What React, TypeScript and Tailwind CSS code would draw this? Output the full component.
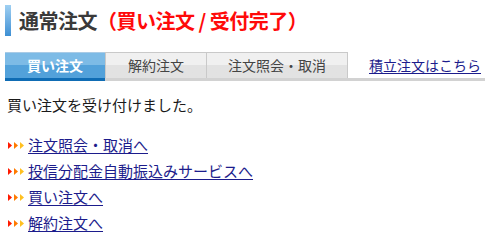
import React from "react";

const Arrows = () => (
  <svg width="17" height="7" viewBox="0 0 17 7" className="shrink-0">
    <polygon points="0,0 4,3.5 0,7" fill="#ff1a00" />
    <polygon points="6,0 10,3.5 6,7" fill="#ff7a00" />
    <polygon points="12,0 16,3.5 12,7" fill="#ffc020" />
  </svg>
);

export default function App() {
  const links = [
    "注文照会・取消へ",
    "投信分配金自動振込みサービスへ",
    "買い注文へ",
    "解約注文へ",
  ];
  return (
    <div
      className="w-[485px] h-[236px] bg-white overflow-hidden"
      style={{ fontFamily: '"Noto Sans CJK JP", "Noto Sans", sans-serif' }}
    >
      <div className="flex items-center pl-[5px] pt-[5px]">
        <div className="w-[6px] h-[31px] bg-gradient-to-b from-[#9fd0f2] to-[#3c8fd3]" />
        <div className="ml-[8px] flex items-center text-[20px] font-bold leading-[31px] tracking-[-0.5px]">
          <span className="text-[#3a3a3a]">通常注文</span>
          <span className="text-[#ff0a0a]">（買い注文 / 受付完了）</span>
        </div>
      </div>

      <div className="mt-[16px] ml-[5px] flex flex-col">
        <div className="flex items-end h-[26px]">
          <div className="w-[100px] h-[26px] flex items-center justify-center border-t border-[#a9cbe6] bg-gradient-to-b from-[#7dbbe6] from-50% to-[#52a1da] to-50% text-white font-bold text-[14px]">
            買い注文
          </div>
          <div className="w-[101px] h-[26px] flex items-center justify-center border-t border-l border-[#c9c9c9] bg-gradient-to-b from-[#f0f0f0] from-50% to-[#e2e2e2] to-50% text-[#444] text-[14px]">
            解約注文
          </div>
          <div className="w-[142px] h-[26px] flex items-center justify-center border-t border-l border-r border-[#c9c9c9] bg-gradient-to-b from-[#f0f0f0] from-50% to-[#e2e2e2] to-50% text-[#444] text-[14px]">
            注文照会・取消
          </div>
          <a
            href="#"
            className="ml-[21px] h-[26px] flex items-center text-[14px] text-[#1c1c8c] underline underline-offset-2"
          >
            積立注文はこちら
          </a>
        </div>
        <div className="flex h-[3px]">
          <div className="w-[100px] bg-[#0f6cb4]" />
          <div className="flex-1 bg-[#d2d2d2]" />
        </div>
      </div>

      <p className="mt-[14px] ml-[7px] text-[15px] leading-[20px] text-[#1a1a1a]">
        買い注文を受け付けました。
      </p>

      <ul className="mt-[20px] ml-[8px] flex flex-col gap-[6px]">
        {links.map((l) => (
          <li key={l} className="flex items-center h-[20px] gap-[3px]">
            <Arrows />
            <a
              href="#"
              className="text-[15px] leading-[20px] text-[#1c1c8c] underline underline-offset-2"
            >
              {l}
            </a>
          </li>
        ))}
      </ul>
    </div>
  );
}
